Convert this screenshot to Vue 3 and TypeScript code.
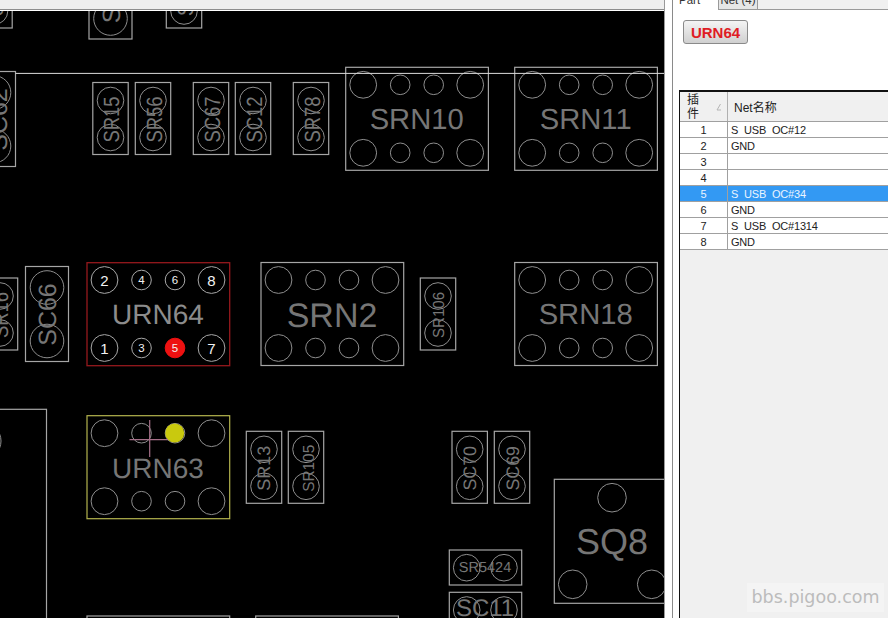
<script setup lang="ts">
interface Label { text: string; x: number; y: number; size: number; sx?: number; rot?: boolean }
interface Pad { x: number; y: number; r: number; num?: string; fill?: string }
interface Box { x: number; y: number; w: number; h: number; stroke?: string }

const boxes: Box[] = []
const pads: Pad[] = []
const labels: Label[] = []

function vert(cx: number, top: number, text: string, size: number, sx: number, off: number) {
  boxes.push({ x: cx - 17.7, y: top, w: 35.4, h: 72 })
  pads.push({ x: cx, y: top + 18, r: 13.3 }, { x: cx, y: top + 55, r: 13.3 })
  labels.push({ text, x: cx + off, y: top + 37, size, sx, rot: true })
}
function big(cx: number, top: number, text: string, baseline: number) {
  boxes.push({ x: cx - 21.5, y: top, w: 43, h: 95 })
  pads.push({ x: cx, y: top + 21, r: 16.8 }, { x: cx, y: top + 74.5, r: 16.8 })
  labels.push({ text, x: baseline, y: top + 48, size: 25, sx: 1, rot: true })
}
function network(x: number, y: number, text: string, size: number, base: number, stroke?: string) {
  boxes.push({ x, y, w: 142.7, h: 103, stroke })
  for (const py of [17.5, 85.5]) {
    pads.push({ x: x + 17.5, y: y + py, r: 13.4 }, { x: x + 54.5, y: y + py, r: 9.8 })
    pads.push({ x: x + 88, y: y + py, r: 9.8 }, { x: x + 124.5, y: y + py, r: 13.4 })
  }
  labels.push({ text, x: x + 71, y: base, size })
}

vert(-5.5, -44, 'SR96', 22, 0.84, 8.8)
vert(184, -44, 'SR97', 22, 0.84, 8.8)
big(110.5, -56, 'SC65', 119.5)
big(-6, 71.5, 'SC62', 7)
big(47, 266.5, 'SC66', 56)
vert(0, 278, 'SR16', 22, 0.84, 7.5)
vert(110.5, 82.5, 'SR15', 22, 0.84, 8.8)
vert(153, 82.5, 'SR56', 22, 0.84, 8.8)
vert(211, 82.5, 'SC67', 22, 0.84, 8.8)
vert(253, 82.5, 'SC12', 22, 0.84, 8.8)
vert(311, 82.5, 'SR78', 22, 0.84, 8.8)
vert(438, 278, 'SR106', 16, 0.94, 5.5)
vert(264, 431.3, 'SR13', 18, 1, 6)
vert(306, 431.3, 'SR105', 16, 0.96, 7.5)
vert(469.7, 431.3, 'SC70', 18, 0.99, 6.3)
vert(512, 431.3, 'SC69', 18, 0.99, 7.3)

network(345.7, 67.3, 'SRN10', 29.2, 129)
network(514.7, 67.3, 'SRN11', 29.2, 129)
network(261, 262.5, 'SRN2', 34, 326.7)
network(514.7, 262.5, 'SRN18', 29.2, 324.3)
network(87, 415.7, 'URN63', 28, 478, '#b4b44e')

boxes.push(
  { x: 449.3, y: 550, w: 72.4, h: 35 },
  { x: 449.3, y: 592.3, w: 72.4, h: 60 },
  { x: 554.3, y: 479.3, w: 130, h: 124 },
  { x: -60, y: 409.3, w: 106.5, h: 300 },
  { x: 87, y: 616, w: 142.7, h: 60 },
  { x: 255.7, y: 616, w: 142.7, h: 60 },
)
pads.push(
  { x: 466.7, y: 567.7, r: 13.3 }, { x: 504, y: 567.7, r: 13.3 },
  { x: 466.7, y: 610, r: 13.3 }, { x: 504, y: 610, r: 13.3 },
  { x: 612, y: 497.7, r: 14.3 }, { x: 572.7, y: 584.3, r: 14.3 }, { x: 651.7, y: 584.3, r: 14.3 },
  { x: -17, y: 441, r: 18 },
)
labels.push(
  { text: 'SR5424', x: 485, y: 572, size: 14.5 },
  { text: 'SC11', x: 485, y: 615.7, size: 24 },
  { text: 'SQ8', x: 612, y: 554.3, size: 36 },
)

const partPads: Pad[] = [
  { x: 104.5, y: 280, r: 13.4, num: '2' }, { x: 141.5, y: 280, r: 9.8, num: '4' },
  { x: 175, y: 280, r: 9.8, num: '6' }, { x: 211.5, y: 280, r: 13.4, num: '8' },
  { x: 104.5, y: 348, r: 13.4, num: '1' }, { x: 141.5, y: 348, r: 9.8, num: '3' },
  { x: 175, y: 348, r: 9.8, num: '5', fill: '#ee1111' }, { x: 211.5, y: 348, r: 13.4, num: '7' },
]

const rows = [
  { pin: 1, net: 'S_USB_OC#12' },
  { pin: 2, net: 'GND' },
  { pin: 3, net: '' },
  { pin: 4, net: '' },
  { pin: 5, net: 'S_USB_OC#34', selected: true },
  { pin: 6, net: 'GND' },
  { pin: 7, net: 'S_USB_OC#1314' },
  { pin: 8, net: 'GND' },
]
</script>

<template>
  <div class="app">
    <section class="board-col">
      <div class="topbar"></div>
      <svg class="board" width="664" height="607" viewBox="0 11 664 607">
        <rect v-for="(b, i) in boxes" :key="'b' + i" :x="b.x" :y="b.y" :width="b.w" :height="b.h"
          fill="none" :stroke="b.stroke || '#a6a6a6'" stroke-width="1.2" />
        <circle v-for="(p, i) in pads" :key="'p' + i" :cx="p.x" :cy="p.y" :r="p.r"
          fill="none" stroke="#8e8e8e" stroke-width="1" />
        <text v-for="(l, i) in labels" :key="'l' + i" class="label" text-anchor="middle"
          :font-size="l.size"
          :transform="l.rot ? `translate(${l.x} ${l.y}) rotate(-90) scale(${l.sx} 1)` : `translate(${l.x} ${l.y})`">{{ l.text }}</text>

        <rect x="87" y="262.7" width="142.7" height="103" fill="none" stroke="#96191d" stroke-width="1.3" />
        <g v-for="p in partPads" :key="p.num">
          <circle :cx="p.x" :cy="p.y" :r="p.r" :fill="p.fill || 'none'" :stroke="p.fill ? p.fill : '#a8a8a8'" />
          <text class="pin" text-anchor="middle" :x="p.x" :y="p.y + (p.r > 10 ? 5.5 : 4)"
            :font-size="p.r > 10 ? 15 : 11.5">{{ p.num }}</text>
        </g>
        <text class="label urn" text-anchor="middle" x="158" y="324" font-size="28">URN64</text>

        <circle cx="174.7" cy="433" r="9.5" fill="#c9c90e" />
        <path d="M129.5 439.7H168M149.7 420V457" fill="none" stroke="#a56f88" stroke-width="1.2" />

        <path d="M15.5 73.4H664" stroke="#dcdcdc" stroke-width="1" />
      </svg>
    </section>

    <div class="gutter"></div>

    <aside class="panel">
      <div class="tabs">
        <div class="tab active"><span>Part</span></div>
        <div class="tab"><span>Net (4)</span></div>
        <div class="tab-rest"></div>
      </div>
      <button class="part-btn">URN64</button>
      <div class="table">
        <div class="head">
          <div class="head-pin">
            <span class="head-title">插件</span>
            <svg class="sort" width="6" height="8" viewBox="0 0 6 8"><path d="M4.5 1L1 7H5" fill="none" stroke="#b5b5b5" /></svg>
          </div>
          <div class="head-net">Net名称</div>
        </div>
        <div v-for="r in rows" :key="r.pin" class="row" :class="{ selected: r.selected }">
          <div class="cell pin-cell"><span class="clip">{{ r.pin }}</span></div>
          <div class="cell net-cell"><span class="clip">{{ r.net }}</span></div>
        </div>
      </div>
      <div class="watermark">bbs.pigoo.com</div>
    </aside>
  </div>
</template>

<style>
html, body { margin: 0; overflow: hidden; background: #fff; }
</style>

<style scoped>
.app {
  display: flex;
  width: 888px;
  height: 618px;
  overflow: hidden;
  font-family: "Liberation Sans", "Noto Sans CJK SC", sans-serif;
  background: #fff;
}
.board-col { width: 664px; flex: none; display: flex; flex-direction: column; }
.topbar {
  height: 9px;
  background: #efefef;
  border-bottom: 1px solid #8e8e8e;
  flex: none;
}
.board {
  display: block;
  background: #000;
  border-top: 1px solid #fff;
  box-sizing: content-box;
}
.label {
  fill: #767676;
  font-family: "Liberation Sans", sans-serif;
  text-rendering: geometricPrecision;
}
.label.urn { fill: #8c8c8c; }
.pin { fill: #f2f2f2; font-family: "Liberation Sans", sans-serif; }
.gutter {
  width: 9px;
  flex: none;
  box-sizing: border-box;
  background: #fff;
  border-left: 1px solid #9a9a9a;
  border-right: 1px solid #8a8a8a;
}
.panel {
  position: relative;
  flex: 1;
  min-width: 0;
  display: flex;
  flex-direction: column;
  background: #fff;
}
.tabs { height: 10px; display: flex; flex: none; font-size: 11.5px; color: #333; }
.tab {
  box-sizing: border-box;
  overflow: hidden;
  line-height: 10px;
  background: #e6e6e6;
  border: 1px solid #9a9a9a;
  border-top: 0;
  width: 40px;
  text-align: center;
}
.tab span { display: block; margin-top: -5px; }
.tab.active {
  width: 45px;
  background: #fff;
  border: 0;
  text-align: left;
  padding-left: 6px;
}
.tab-rest { flex: 1; background: #f0f0f0; border-bottom: 1px solid #9a9a9a; }
.part-btn {
  align-self: flex-start;
  margin: 10px 0 0 10px;
  width: 65px;
  height: 24px;
  padding: 0;
  box-sizing: border-box;
  border: 1px solid #8a8a8a;
  border-radius: 3px;
  background: linear-gradient(#f4f4f4, #d0d0d0);
  color: #df1c24;
  font: bold 15px "Liberation Sans", sans-serif;
}
.table {
  flex: 1;
  margin: 46px 0 0 6px;
  box-sizing: border-box;
  background: #f0f0f0;
  border-left: 1px solid #111;
  border-top: 2px solid #111;
  font-size: 11px;
  letter-spacing: -0.2px;
  color: #222;
}
.head {
  display: grid;
  grid-template-columns: 48px 1fr;
  height: 30px;
  box-sizing: border-box;
  border-bottom: 1px solid #a0a0a0;
  font-size: 12px;
  letter-spacing: 0;
  background: #f0f0f0;
}
.head-pin {
  display: flex;
  box-sizing: border-box;
  border-right: 1px solid #b0b0b0;
  padding-left: 7px;
}
.head-title { display: block; width: 13px; line-height: 14px; padding-top: 1px; }
.sort { margin: 11px 0 0 16px; }
.head-net { padding: 9px 0 0 6px; line-height: 14px; }
.row {
  display: grid;
  grid-template-columns: 48px 1fr;
  height: 16px;
  box-sizing: border-box;
  border-bottom: 1px solid #a0a0a0;
  background: #fff;
}
.row.selected { background: #3399f3; color: #eaf4ff; }
.cell { box-sizing: border-box; height: 15px; padding-top: 2px; }
.clip { display: block; height: 11px; line-height: 13px; overflow: hidden; white-space: nowrap; }
.pin-cell { border-right: 1px solid #a0a0a0; text-align: center; }
.net-cell { padding-left: 3px; }
.watermark {
  position: absolute;
  right: 4px;
  bottom: 6px;
  width: 137px;
  height: 29px;
  text-align: center;
  background: #f4f4f4;
  color: #bcbcbc;
  font: 17.5px/29px "DejaVu Sans", sans-serif;
}
</style>
